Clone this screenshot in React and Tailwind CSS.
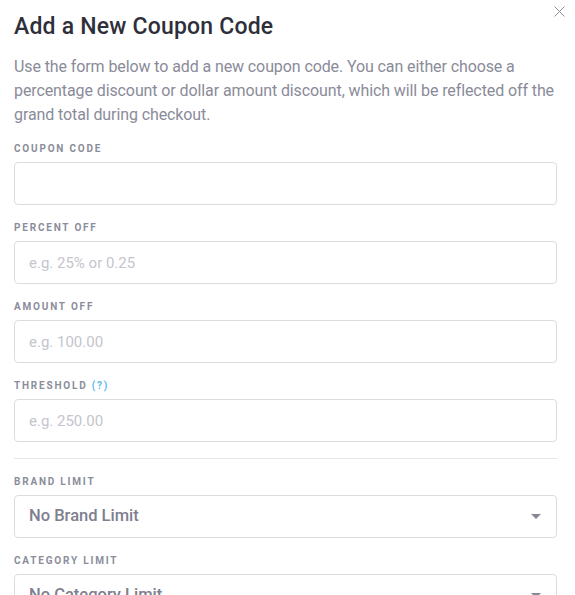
import React from "react";

function Label({ children }) {
  return (
    <div className="text-[10px] font-bold tracking-[0.18em] text-[#8b8d9a] leading-[12px] mb-[7px]">
      {children}
    </div>
  );
}

function Input({ placeholder }) {
  return (
    <input
      className="block w-full h-[43px] rounded-[4px] border border-[#dcdce0] bg-white px-[14px] text-[15px] text-[#444] placeholder:text-[#c4c5cd] outline-none"
      placeholder={placeholder}
    />
  );
}

function Select({ value }) {
  return (
    <div className="flex items-center justify-between w-full h-[43px] rounded-[4px] border border-[#dcdce0] bg-white pl-[14px] pr-[15px]">
      <span className="text-[16.5px] font-medium text-[#7e808e]">{value}</span>
      <svg width="10" height="5" viewBox="0 0 10 5">
        <path d="M0 0 L10 0 L5 5 Z" fill="#868896" />
      </svg>
    </div>
  );
}

export default function App() {
  return (
    <div
      className="relative w-[575px] h-[595px] overflow-hidden bg-white pl-[14px] pr-[18px] pt-[11px]"
      style={{ fontFamily: "Roboto, 'Liberation Sans', sans-serif" }}
    >
      <button className="absolute right-[10px] top-[6px]">
        <svg width="11" height="11" viewBox="0 0 11 11">
          <path d="M0.5 0.5 L10.5 10.5 M10.5 0.5 L0.5 10.5" stroke="#8e8f98" strokeWidth="1" />
        </svg>
      </button>
      <h1 className="text-[23px] font-medium tracking-[0.2px] text-[#2e2f3a] leading-[32px]">Add a New Coupon Code</h1>
      <p className="mt-[12px] text-[16px] tracking-[-0.1px] leading-[24px] text-[#8a8b99] whitespace-nowrap">
        Use the form below to add a new coupon code. You can either choose a
        <br />
        percentage discount or dollar amount discount, which will be reflected off the
        <br />
        grand total during checkout.
      </p>
      <div className="mt-[16px] flex flex-col gap-[17px]">
        <div>
          <Label>COUPON CODE</Label>
          <Input placeholder="" />
        </div>
        <div>
          <Label>PERCENT OFF</Label>
          <Input placeholder="e.g. 25% or 0.25" />
        </div>
        <div>
          <Label>AMOUNT OFF</Label>
          <Input placeholder="e.g. 100.00" />
        </div>
        <div>
          <Label>
            THRESHOLD <span className="text-[#5bb8e8]">(?)</span>
          </Label>
          <Input placeholder="e.g. 250.00" />
        </div>
      </div>
      <div className="mt-[16px] mb-[17px] h-px bg-[#e6e6ea]" />
      <div className="flex flex-col gap-[17px]">
        <div>
          <Label>BRAND LIMIT</Label>
          <Select value="No Brand Limit" />
        </div>
        <div>
          <Label>CATEGORY LIMIT</Label>
          <Select value="No Category Limit" />
        </div>
      </div>
    </div>
  );
}
